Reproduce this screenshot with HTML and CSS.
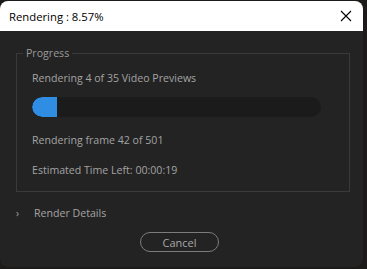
FILE: index.html
```html
<!DOCTYPE html>
<html>
<head>
<meta charset="utf-8">
<link rel="stylesheet" href="styles.css">
</head>
<body>
<div class="window">
  <div class="titlebar">
    <span class="title">Rendering : 8.57%</span>
    <svg class="close" width="12" height="12" viewBox="0 0 12 12"><path d="M1 1L11 11M11 1L1 11" stroke="#000" stroke-width="1.1"/></svg>
  </div>
  <div class="content">
    <fieldset class="group">
      <legend>Progress</legend>
      <div class="line first">Rendering 4 of 35 Video Previews</div>
      <div class="track"><div class="fill" style="width:25px"></div></div>
      <div class="line">Rendering frame 42 of 501</div>
      <div class="line">Estimated Time Left: 00:00:19</div>
    </fieldset>
    <div class="details"><span class="chev">›</span><span>Render Details</span></div>
    <div class="actions"><button class="cancel">Cancel</button></div>
  </div>
</div>
</body>
</html>
```
FILE: styles.css
```css
html, body { margin: 0; padding: 0; }
body {
  width: 367px; height: 269px; overflow: hidden;
  background: #1d1b1a;
  font-family: "Open Sans", "Noto Sans", sans-serif;
}
.window {
  margin-top: 1px;
  width: 363px; height: 266px;
  border-radius: 8px;
  overflow: hidden;
  background: #232323;
  display: flex; flex-direction: column;
}
.titlebar {
  height: 30px; flex: none;
  background: #ffffff;
  display: flex; align-items: center; justify-content: space-between;
  padding: 0 10px 0 9px;
}
.title { font-family: "Open Sans", sans-serif; font-size: 11.3px; color: #000; }
.close { display: block; margin-right: 1px; }
.content { display: flex; flex-direction: column; flex: 1; }
.group {
  margin: 15px 13px 0 16px;
  padding: 0 28px 0 15px;
  border: 1px solid #3a3a3a;
  height: 146px; box-sizing: border-box;
}
.group legend {
  color: #9a9a9a; font-size: 10.6px; padding: 0 3px; margin-left: -9px;
  line-height: 14px;
}
.line { color: #a3a3a3; font-size: 10.6px; line-height: 14px; margin-top: 16px; }
.line.first { margin-top: 11px; }
.track {
  margin-top: 12px; height: 20px; border-radius: 10px;
  background: #1b1b1b; overflow: hidden;
}
.fill { height: 100%; background: #2f8de4; border-radius: 10px 0 0 10px; }
.details { display: flex; align-items: center; margin: 14px 0 0 16px; color: #a3a3a3; font-size: 10.6px; line-height: 14px; }
.chev { width: 18px; font-size: 10px; }
.actions { display: flex; justify-content: center; margin-top: 12px; padding-right: 4px; }
.cancel {
  width: 79px; height: 20px; border-radius: 10px;
  background: transparent; border: 1px solid #7c7c7c;
  color: #a8a8a8; font-family: "Open Sans", sans-serif; font-size: 11px; padding: 0;
}
```
